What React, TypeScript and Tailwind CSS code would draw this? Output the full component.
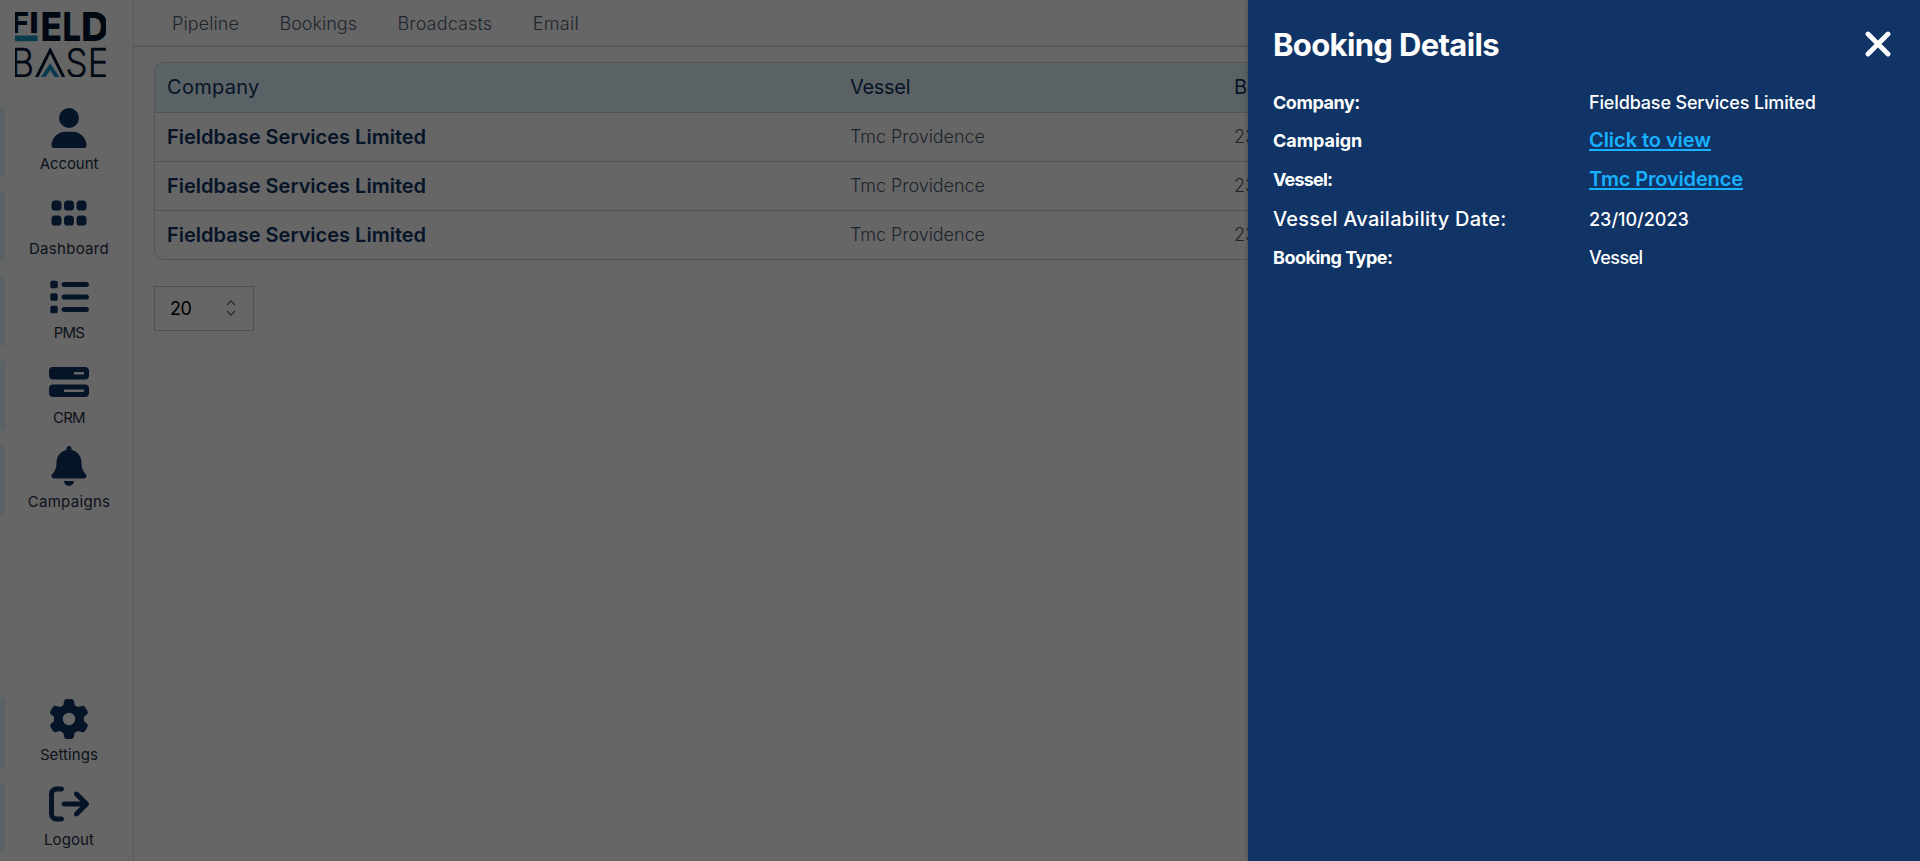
import type { ReactNode } from "react";
import {
  FaArrowRightFromBracket,
  FaBarsProgress,
  FaBell,
  FaGear,
  FaGrip,
  FaList,
  FaUser,
} from "react-icons/fa6";

function Logo() {
  return (
    <svg viewBox="0 0 91 66" className="h-[66px] w-[91px]" fontFamily="Inter, sans-serif" fill="#021434">
      <g fontWeight={800}>
        <text x={-4} y={22} fontSize={29} textLength={18} lengthAdjust="spacingAndGlyphs">F</text>
        <text x={14.3} y={22} fontSize={29} textLength={9.5} lengthAdjust="spacingAndGlyphs">I</text>
        <text x={25.4} y={30} fontSize={40} textLength={21.5} lengthAdjust="spacingAndGlyphs">E</text>
        <text x={47.5} y={30} fontSize={40} textLength={18.5} lengthAdjust="spacingAndGlyphs">L</text>
        <text x={66} y={30} fontSize={40} textLength={28} lengthAdjust="spacingAndGlyphs">D</text>
      </g>
      <rect x={0} y={24.5} width={22.6} height={5.7} fill="#1593c4" />
      <g fontWeight={300} stroke="#021434" strokeWidth={0.4}>
        <text x={-4} y={65.5} fontSize={39} textLength={23} lengthAdjust="spacingAndGlyphs">B</text>
        <text x={50.5} y={65.5} fontSize={39} textLength={22} lengthAdjust="spacingAndGlyphs">S</text>
        <text x={72.8} y={65.5} fontSize={39} textLength={21} lengthAdjust="spacingAndGlyphs">E</text>
      </g>
      <path d="M21.3 67 35.2 39.3 49.1 67" fill="none" stroke="#021434" strokeWidth={3} />
      <path d="M27.2 67.5 35.2 55.8 43.2 67.5" fill="none" stroke="#1593c4" strokeWidth={4} />
    </svg>
  );
}

function NavItem({ icon, label, tracking }: { icon: ReactNode; label: string; tracking: string }) {
  return (
    <a className="flex h-[69.5px] w-full shrink-0 flex-col items-center border-l-[5px] border-[#e3f6fd] pt-[1.2px] text-[40px] text-[#0f3465]">
      {icon}
      <span className={`mt-1 text-[15px] leading-6 text-[#1e3048] ${tracking}`}>{label}</span>
    </a>
  );
}

function Sidebar() {
  return (
    <aside className="flex h-full w-[134px] shrink-0 flex-col justify-between border-r border-[#e1e3e6] pb-[9px]">
      <div className="flex flex-col gap-[15px]">
        <div className="h-[92px] pt-[11px] pl-[15px]">
          <Logo />
        </div>
        <NavItem icon={<FaUser />} label="Account" tracking="tracking-[-0.1px]" />
        <NavItem icon={<FaGrip />} label="Dashboard" tracking="tracking-[0.3px]" />
        <NavItem icon={<FaList />} label="PMS" tracking="tracking-[-0.8px]" />
        <NavItem icon={<FaBarsProgress />} label="CRM" tracking="tracking-[-0.8px]" />
        <NavItem icon={<FaBell />} label="Campaigns" tracking="tracking-[0.3px]" />
      </div>
      <div className="flex flex-col gap-[15px]">
        <NavItem icon={<FaGear />} label="Settings" tracking="tracking-[0.1px]" />
        <NavItem icon={<FaArrowRightFromBracket />} label="Logout" tracking="tracking-[0.1px]" />
      </div>
    </aside>
  );
}

function TopNav() {
  return (
    <nav className="flex h-[47px] items-center gap-[40.5px] border-b-2 border-[#dcdddf] pt-0.5 pl-[38px] text-lg font-light text-[#4f6076]">
      <a className="tracking-[0.1px]">Pipeline</a>
      <a>Bookings</a>
      <a className="tracking-[0.15px]">Broadcasts</a>
      <a className="tracking-[0.3px]">Email</a>
    </nav>
  );
}

const bookings = [
  { id: 1, company: "Fieldbase Services Limited", vessel: "Tmc Providence", date: "23/10/2023" },
  { id: 2, company: "Fieldbase Services Limited", vessel: "Tmc Providence", date: "23/10/2023" },
  { id: 3, company: "Fieldbase Services Limited", vessel: "Tmc Providence", date: "23/10/2023" },
];

function BookingsTable() {
  return (
    <div className="overflow-hidden rounded-[10px] border border-[#cbd0da]">
      <div className="grid h-[48.5px] grid-cols-[683px_384px_1fr] items-center bg-[#e3f6fd] pl-3 text-xl text-[#0f3465]">
        <span className="tracking-[0.3px]">Company</span>
        <span className="tracking-[-0.3px]">Vessel</span>
        <span>Booking Date</span>
      </div>
      {bookings.map((b) => (
        <div
          key={b.id}
          className="grid h-[49.3px] grid-cols-[683px_384px_1fr] items-center border-t border-[#cbd0da] pl-3 text-lg font-light text-[#4b5a70]"
        >
          <span className="text-xl font-semibold text-[#0f3465]">{b.company}</span>
          <span className="tracking-[-0.05px]">{b.vessel}</span>
          <span>{b.date}</span>
        </div>
      ))}
    </div>
  );
}

function PageSize() {
  return (
    <div className="mt-[25.5px] flex h-[45px] w-[100px] items-center justify-between border border-[#c6cdd5] pr-[17px] pl-[15px] text-lg text-black">
      <span className="pt-px tracking-[-0.6px]">20</span>
      <svg viewBox="0 0 10 16" className="h-4 w-2.5" fill="none" stroke="#737373" strokeWidth={1.3}>
        <path d="M1 5 5 1l4 4M1 11l4 4 4-4" />
      </svg>
    </div>
  );
}

function Label({ children, className }: { children: ReactNode; className: string }) {
  return <dt className={`font-bold ${className}`}>{children}</dt>;
}

function BookingDrawer() {
  return (
    <section className="absolute inset-y-0 right-0 w-[672px] bg-[#0f3465] pt-6 pr-7 pl-[25px] text-white shadow-[0_0_4px_rgba(0,0,0,0.3)]">
      <header className="flex h-10 items-center justify-between">
        <h1 className="pt-0.5 text-[31px] font-bold tracking-[-0.65px]">Booking Details</h1>
        <svg viewBox="0 0 26 26" className="mr-px h-[26px] w-[26px]" stroke="#fff" strokeWidth={4.8} strokeLinecap="round">
          <path d="M3 3 23 23M23 3 3 23" />
        </svg>
      </header>
      <dl className="mt-5 grid auto-rows-[38.7px] grid-cols-[316px_1fr] items-center text-lg font-medium">
        <Label className="tracking-[-0.45px]">Company:</Label>
        <dd className="tracking-[-0.15px]">Fieldbase Services Limited</dd>
        <Label className="pb-0.5 tracking-[-0.05px]">Campaign</Label>
        <dd className="pb-[3px]">
          <a className="text-xl font-semibold tracking-[-0.05px] text-[#17b1ff] underline decoration-2 underline-offset-2 [text-decoration-skip-ink:none]">
            Click to view
          </a>
        </dd>
        <Label className="pb-px tracking-[-0.8px]">Vessel:</Label>
        <dd className="pb-[3px]">
          <a className="text-xl font-semibold tracking-[-0.15px] text-[#17b1ff] underline decoration-2 underline-offset-2 [text-decoration-skip-ink:none]">
            Tmc Providence
          </a>
        </dd>
        <dt className="text-xl tracking-[0.25px]">Vessel Availability Date:</dt>
        <dd className="pt-px">23/10/2023</dd>
        <Label className="tracking-[-0.5px]">Booking Type:</Label>
        <dd className="tracking-[-0.55px]">Vessel</dd>
      </dl>
    </section>
  );
}

export default function App() {
  return (
    <div className="relative flex h-screen overflow-hidden bg-white font-[Inter,sans-serif]">
      <Sidebar />
      <main className="min-w-0 flex-1">
        <TopNav />
        <div className="px-5 pt-[15px]">
          <BookingsTable />
          <PageSize />
        </div>
      </main>
      <div className="absolute inset-0 bg-black/60" />
      <BookingDrawer />
    </div>
  );
}
